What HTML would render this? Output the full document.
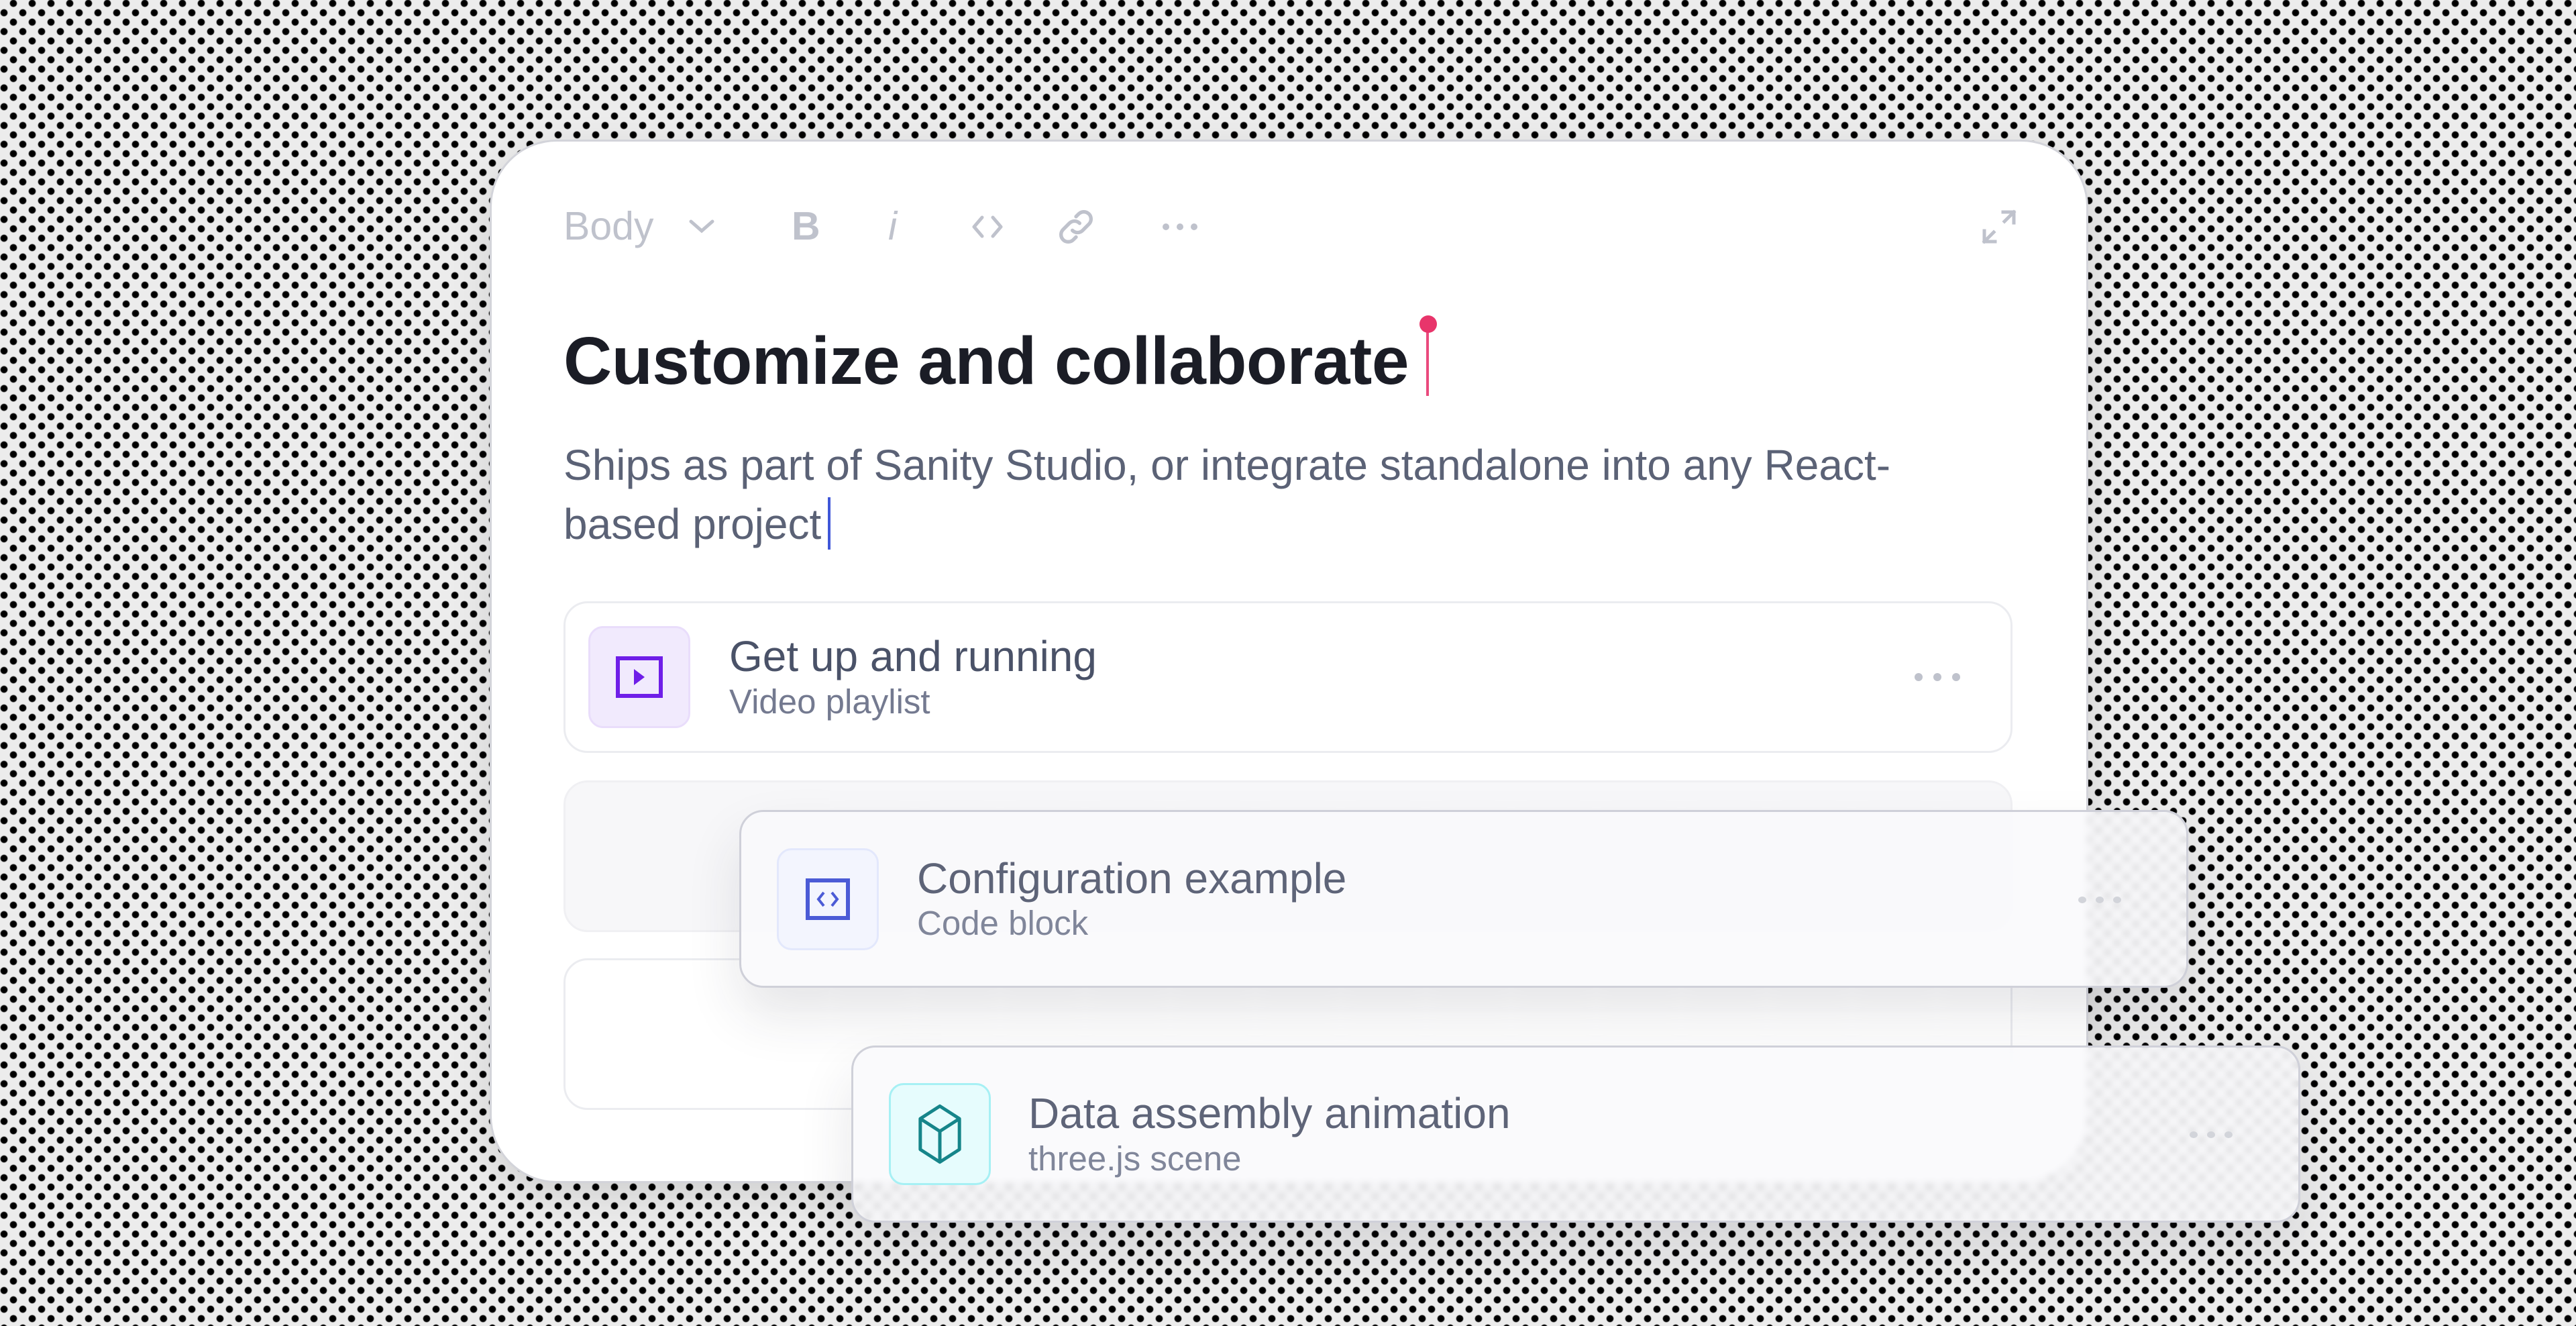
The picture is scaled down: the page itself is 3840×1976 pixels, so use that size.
<!DOCTYPE html>
<html><head><meta charset="utf-8"><style>
html,body{margin:0;padding:0}
body{width:3840px;height:1976px;overflow:hidden;position:relative;font-family:"Liberation Sans",sans-serif;
background-color:#ececec;
background-image:radial-gradient(circle,#000 0,#000 4.5px,rgba(0,0,0,0) 6px),radial-gradient(circle,#000 0,#000 4.5px,rgba(0,0,0,0) 6px);
background-size:28px 28px,28px 28px;background-position:6px -9px,-8px 5px;}
.abs{position:absolute}
.main{left:730px;top:208px;width:2383px;height:1555px;background:#fff;border:3px solid #d3d4da;border-radius:100px;box-sizing:border-box;box-shadow:0 20px 60px rgba(0,0,0,0.12)}
.tb{color:#bfc2cc;font-size:59px}
.card{border-radius:36px;box-sizing:border-box}
.ib{border-radius:22px;box-sizing:border-box;display:flex;align-items:center;justify-content:center}
.t{font-size:64px;color:#4a5268;white-space:nowrap}
.s{font-size:51px;color:#747a90;white-space:nowrap}
.float{background:rgba(249,249,251,0.86);backdrop-filter:blur(5px);-webkit-backdrop-filter:blur(5px);border:3px solid #cfd0d9;box-shadow:0 40px 80px rgba(40,40,60,0.12)}
</style></head><body>
<div class="abs main"></div>

<!-- toolbar -->
<div class="abs tb" style="left:840px;top:305px;line-height:64px">Body</div>
<svg class="abs" style="left:1022px;top:322px" width="48" height="32" viewBox="0 0 48 32"><path d="M8 8 L24 22 L40 8" fill="none" stroke="#bfc2cc" stroke-width="5" stroke-linecap="round"/></svg>
<div class="abs tb" style="left:1180px;top:305px;font-weight:bold;line-height:64px">B</div>
<div class="abs tb" style="left:1324px;top:305px;font-style:italic;line-height:64px">i</div>
<svg class="abs" style="left:1444px;top:316px" width="56" height="44" viewBox="0 0 56 44"><path d="M20 8 L8 22 L20 36 M36 8 L48 22 L36 36" fill="none" stroke="#bfc2cc" stroke-width="5" stroke-linecap="round" stroke-linejoin="round"/></svg>
<svg class="abs" style="left:1572px;top:306px" width="64" height="64" viewBox="0 0 24 24"><path d="M10 14a4 4 0 0 0 5.7 0l3.5-3.5a4 4 0 0 0-5.7-5.7L12 6.3M14 10a4 4 0 0 0-5.7 0L4.8 13.5a4 4 0 0 0 5.7 5.7L12 17.7" fill="none" stroke="#bfc2cc" stroke-width="2" stroke-linecap="round"/></svg>
<svg class="abs" style="left:1728px;top:322px" width="64" height="32" viewBox="0 0 64 32"><circle cx="10" cy="16" r="5" fill="#bfc2cc"/><circle cx="31" cy="16" r="5" fill="#bfc2cc"/><circle cx="52" cy="16" r="5" fill="#bfc2cc"/></svg>
<svg class="abs" style="left:2950px;top:308px" width="60" height="60" viewBox="0 0 60 60"><path d="M36 8 H52 V24 M52 8 L38 22 M24 52 H8 V36 M8 52 L22 38" fill="none" stroke="#bfc2cc" stroke-width="5" stroke-linecap="square"/></svg>

<!-- heading -->
<div class="abs" style="left:840px;top:478px;font-size:100px;font-weight:bold;color:#1b1d26;line-height:120px;letter-spacing:-0.5px;white-space:nowrap">Customize and collaborate</div>
<div class="abs" style="left:2126px;top:490px;width:4px;height:100px;background:#ea4a7d"></div>
<div class="abs" style="left:2116px;top:470px;width:26px;height:26px;border-radius:50%;background:#e8356b"></div>

<div class="abs" style="left:840px;top:649px;width:2200px;font-size:64px;color:#5b6276;line-height:88px;white-space:nowrap">Ships as part of Sanity Studio, or integrate standalone into any React-<br>based project<span style="display:inline-block;width:4px;height:78px;background:#3f57d8;vertical-align:-16px;margin-left:10px"></span></div>

<!-- card 1 -->
<div class="abs card" style="left:840px;top:896px;width:2160px;height:226px;background:#fff;border:3px solid #ebecf0"></div>
<div class="abs ib" style="left:877px;top:933px;width:152px;height:152px;background:#f1eafd;border:3px solid #e9ddfb">
<svg width="76" height="76" viewBox="0 0 76 76"><rect x="6" y="10" width="64" height="56" fill="none" stroke="#6f1ee8" stroke-width="6"/><path d="M30 26 L46 38 L30 50 Z" fill="#6f1ee8"/></svg></div>
<div class="abs t" style="left:1087px;top:942px;line-height:72px">Get up and running</div>
<div class="abs s" style="left:1087px;top:1018px;line-height:56px">Video playlist</div>
<svg class="abs" style="left:2848px;top:994px" width="80" height="30" viewBox="0 0 80 30"><circle cx="12" cy="15" r="6" fill="#bfc2cc"/><circle cx="40" cy="15" r="6" fill="#bfc2cc"/><circle cx="68" cy="15" r="6" fill="#bfc2cc"/></svg>

<!-- card 2 / 3 behind -->
<div class="abs card" style="left:840px;top:1163px;width:2160px;height:226px;background:#f7f7f9;border:3px solid #f0f0f3"></div>
<div class="abs card" style="left:840px;top:1428px;width:2160px;height:226px;background:#fff;border:3px solid #ebecf0"></div>

<!-- floating A -->
<div class="abs card float" style="left:1102px;top:1207px;width:2160px;height:265px"></div>
<div class="abs ib" style="left:1158px;top:1264px;width:152px;height:152px;background:#f3f5fe;border:3px solid #e3e8fc">
<svg width="76" height="76" viewBox="0 0 76 76"><rect x="8" y="10" width="60" height="56" fill="none" stroke="#4b5bd6" stroke-width="6"/><path d="M32 28 L24 38 L32 48 M44 28 L52 38 L44 48" fill="none" stroke="#4b5bd6" stroke-width="4"/></svg></div>
<div class="abs t" style="left:1367px;top:1273px;line-height:72px;color:#5e6478">Configuration example</div>
<div class="abs s" style="left:1367px;top:1348px;line-height:56px;color:#80869a">Code block</div>
<svg class="abs" style="left:3090px;top:1326px" width="90" height="30" viewBox="0 0 90 30"><ellipse cx="14" cy="15" rx="6" ry="5" fill="#d2d4da"/><ellipse cx="40" cy="15" rx="6" ry="5" fill="#d2d4da"/><ellipse cx="66" cy="15" rx="6" ry="5" fill="#d2d4da"/></svg>

<!-- floating B -->
<div class="abs card float" style="left:1269px;top:1558px;width:2160px;height:264px"></div>
<div class="abs ib" style="left:1325px;top:1614px;width:152px;height:152px;background:#e6fcfd;border:3px solid #a6f0f4">
<svg width="100" height="100" viewBox="0 0 24 24"><path d="M12 2 L19 6.5 V17.5 L12 22 L5 17.5 V6.5 Z M5 6.5 L12 11 L19 6.5 M12 11 V22" fill="none" stroke="#16858a" stroke-width="1.2" stroke-linejoin="round"/></svg></div>
<div class="abs t" style="left:1533px;top:1623px;line-height:72px;color:#5e6478">Data assembly animation</div>
<div class="abs s" style="left:1533px;top:1699px;line-height:56px;color:#80869a">three.js scene</div>
<svg class="abs" style="left:3256px;top:1676px" width="90" height="30" viewBox="0 0 90 30"><ellipse cx="14" cy="15" rx="6" ry="5" fill="#d2d4da"/><ellipse cx="40" cy="15" rx="6" ry="5" fill="#d2d4da"/><ellipse cx="66" cy="15" rx="6" ry="5" fill="#d2d4da"/></svg>
</body></html>
